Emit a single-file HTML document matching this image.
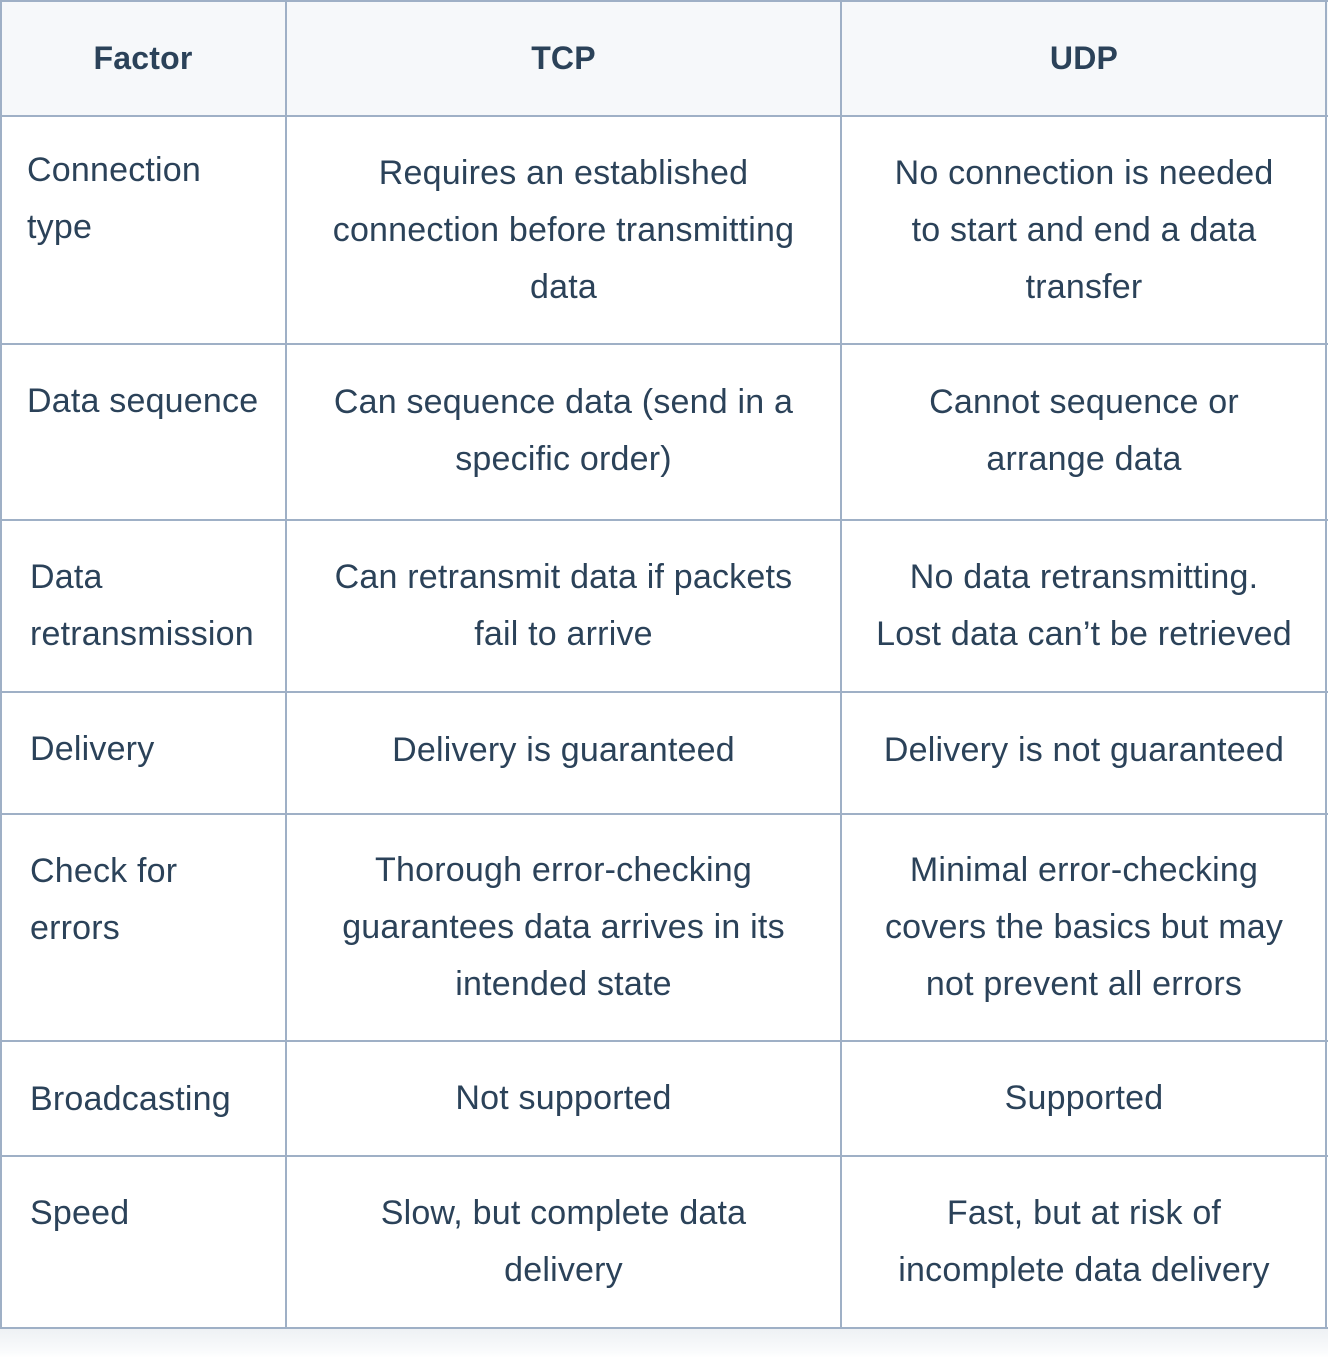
<!DOCTYPE html>
<html><head><meta charset="utf-8"><style>
body{margin:0;width:1328px;height:1358px;background:#fff;position:relative;overflow:hidden;font-family:"Liberation Sans",sans-serif;color:#2b4259;}
.shadow{position:absolute;left:0;top:1329px;width:1328px;height:29px;background:linear-gradient(#eef1f4,#fafbfc 80%,#fff);}
.hdr{position:absolute;left:0;top:0;width:1328px;height:116px;background:#f6f8fa;}
.h{position:absolute;background:#9fb0c6;height:2px;left:0;width:1328px;}
.v{position:absolute;background:#9fb0c6;width:2px;top:0;height:1329px;}
.c{position:absolute;font-size:34px;line-height:57px;display:flex;align-items:center;justify-content:center;text-align:center;letter-spacing:0.2px;}
.f{position:absolute;font-size:34px;line-height:57px;left:30px;width:256px;letter-spacing:0.2px;}
.b{font-weight:bold;font-size:32px;}
</style></head><body>
<div class="shadow"></div>
<div class="hdr"></div>
<div class="h" style="top:0"></div><div class="h" style="top:115px"></div><div class="h" style="top:343px"></div><div class="h" style="top:519px"></div><div class="h" style="top:691px"></div><div class="h" style="top:813px"></div><div class="h" style="top:1040px"></div><div class="h" style="top:1155px"></div><div class="h" style="top:1327px"></div>
<div class="v" style="left:0"></div><div class="v" style="left:285px"></div><div class="v" style="left:840px"></div><div class="v" style="left:1325px"></div>

<div class="c b" style="left:0;width:286px;top:0;height:116px">Factor</div>
<div class="c b" style="left:286px;width:555px;top:0;height:116px">TCP</div>
<div class="c b" style="left:841px;width:486px;top:0;height:116px">UDP</div>

<div class="f" style="top:142px;left:27px">Connection<br>type</div>
<div class="c" style="left:286px;width:555px;top:116px;height:228px">Requires an established<br>connection before transmitting<br>data</div>
<div class="c" style="left:841px;width:486px;top:116px;height:228px">No connection is needed<br>to start and end a data<br>transfer</div>

<div class="f" style="top:373px;left:27px">Data sequence</div>
<div class="c" style="left:286px;width:555px;top:344px;height:174px">Can sequence data (send in a<br>specific order)</div>
<div class="c" style="left:841px;width:486px;top:344px;height:174px">Cannot sequence or<br>arrange data</div>

<div class="f" style="top:549px">Data<br>retransmission</div>
<div class="c" style="left:286px;width:555px;top:520px;height:172px">Can retransmit data if packets<br>fail to arrive</div>
<div class="c" style="left:841px;width:486px;top:520px;height:172px">No data retransmitting.<br>Lost data can’t be retrieved</div>

<div class="f" style="top:721px">Delivery</div>
<div class="c" style="left:286px;width:555px;top:692px;height:116px">Delivery is guaranteed</div>
<div class="c" style="left:841px;width:486px;top:692px;height:116px">Delivery is not guaranteed</div>

<div class="f" style="top:843px">Check for<br>errors</div>
<div class="c" style="left:286px;width:555px;top:814px;height:227px">Thorough error-checking<br>guarantees data arrives in its<br>intended state</div>
<div class="c" style="left:841px;width:486px;top:814px;height:227px">Minimal error-checking<br>covers the basics but may<br>not prevent all errors</div>

<div class="f" style="top:1071px">Broadcasting</div>
<div class="c" style="left:286px;width:555px;top:1041px;height:115px">Not supported</div>
<div class="c" style="left:841px;width:486px;top:1041px;height:115px">Supported</div>

<div class="f" style="top:1185px">Speed</div>
<div class="c" style="left:286px;width:555px;top:1156px;height:172px">Slow, but complete data<br>delivery</div>
<div class="c" style="left:841px;width:486px;top:1156px;height:172px">Fast, but at risk of<br>incomplete data delivery</div>
</body></html>
